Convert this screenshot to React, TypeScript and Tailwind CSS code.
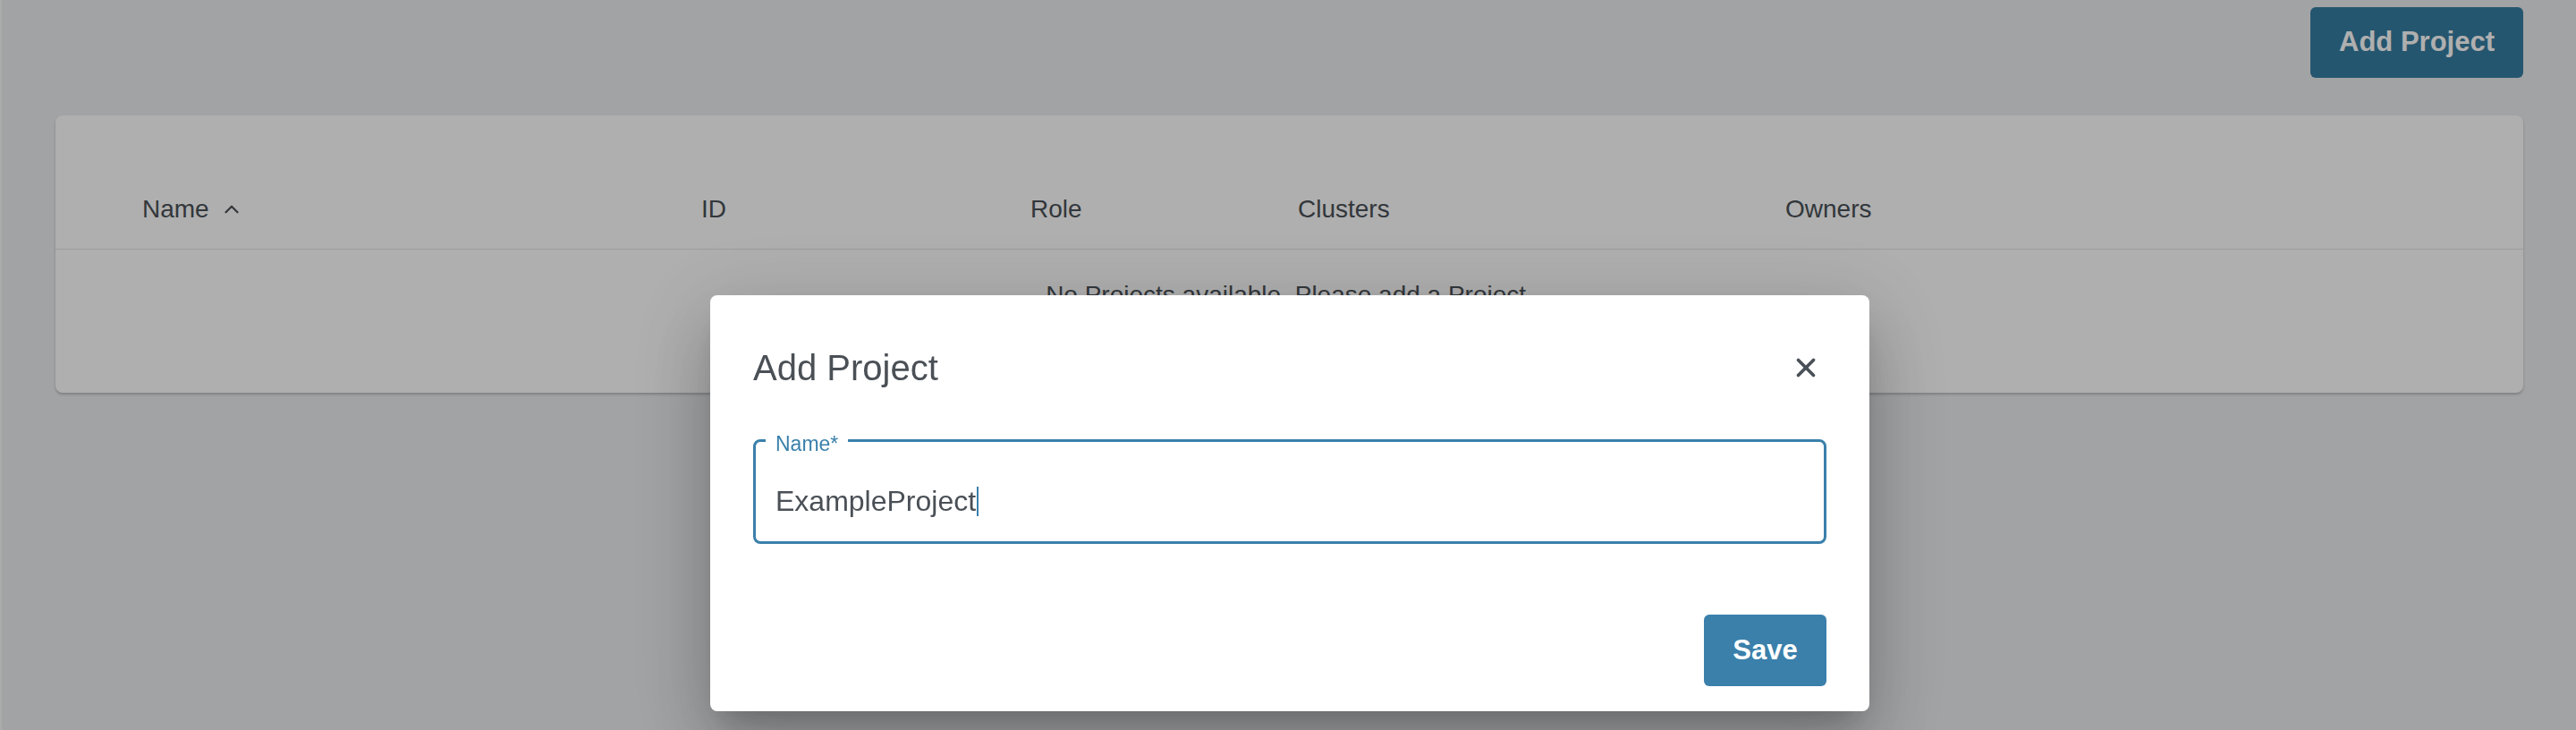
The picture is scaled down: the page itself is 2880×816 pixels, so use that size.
import React from 'react';
import { X, ChevronUp } from 'lucide-react';

const columns = ['Name', 'ID', 'Role', 'Clusters', 'Owners'];

const ProjectsTable: React.FC = () => {
  return (
    <div className="ml-[60px] mr-[59px] mt-[42px] h-[310px] rounded-[8px] bg-white shadow-[0_2px_3px_rgba(0,0,0,0.22)] flex flex-col">
      {/* header row */}
      <div className="grid grid-cols-[625px_368px_299px_545px_1fr] pl-[97px] pt-[84px] pb-[23px] border-b border-[#e2e2e2] text-[28px] leading-[42px] text-[#4a5056]">
        {columns.map(col => (
          <div key={col} className="flex items-center">
            <span>{col}</span>
            {col === 'Name' && <ChevronUp className="ml-[12px] w-[26px] h-[26px]" strokeWidth={2} />}
          </div>
        ))}
      </div>
      <div className="pt-[30px] text-center text-[28px] leading-[42px] text-[#4a5056]">
        No Projects available. Please add a Project.
      </div>
    </div>
  );
};

const AddProjectDialog: React.FC = () => {
  return (
    <div className="fixed inset-0 bg-black/[0.314] flex justify-center items-start pt-[330px]">
      <div className="w-[1296px] ml-[4px] rounded-[8px] bg-white shadow-[0_22px_30px_-14px_rgba(0,0,0,0.2),0_48px_76px_6px_rgba(0,0,0,0.14),0_18px_92px_16px_rgba(0,0,0,0.12)] pt-[57px] pb-[28px]">
        <div className="flex items-center justify-between pl-[48px] pr-[54px]">
          <h2 className="text-[40px] leading-[48px] text-[#4a5056]">Add Project</h2>
          <X className="w-[34px] h-[34px] text-[#4a5058]" strokeWidth={2.6} />
        </div>

        <div className="px-[48px] mt-[56px]">
          <div className="relative h-[117px] rounded-[8px] border-[3px] border-[#3a80ab] pl-[22px] pt-[46px]">
            <span className="absolute left-[11px] top-[-9px] bg-white px-[11px] text-[23px] leading-none text-[#3a80ab]">
              Name*
            </span>
            <div className="flex items-center text-[32px] leading-[40px] text-[#4a5056]">
              <span>ExampleProject</span>
              <span className="ml-[1px] w-[2px] h-[33px] bg-[#3a80ab]" />
            </div>
          </div>
        </div>

        <div className="flex justify-end pr-[48px] mt-[79px]">
          <button className="w-[137px] h-[80px] rounded-[6px] bg-[#3a80ab] text-white text-[31px] font-bold">
            Save
          </button>
        </div>
      </div>
    </div>
  );
};

export default function App() {
  return (
    <div className="relative min-h-screen w-full bg-[#eceef1] border-l-[2px] border-[#fafafa] font-['Liberation_Sans',Arial,sans-serif]">
      <div className="flex justify-end pt-[8px] pr-[59px]">
        <button className="w-[238px] h-[79px] rounded-[6px] bg-[#367ea2] text-white text-[31px] font-bold">
          Add Project
        </button>
      </div>
      <ProjectsTable />
      <AddProjectDialog />
    </div>
  );
}
